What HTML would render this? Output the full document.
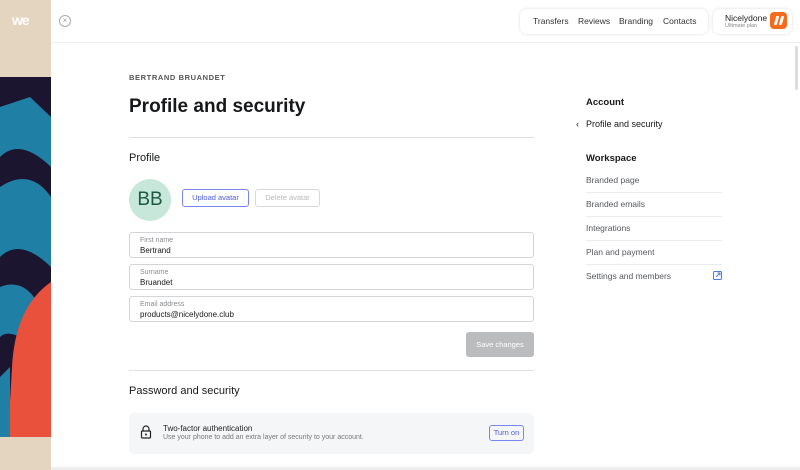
<!DOCTYPE html>
<html><head><meta charset="utf-8"><style>
*{box-sizing:border-box;margin:0;padding:0}
body{width:800px;height:470px;overflow:hidden;background:#fff;font-family:"Liberation Sans",sans-serif;color:#17181a;position:relative}
.a{position:absolute}
.t{position:absolute;white-space:nowrap}
.inp{position:absolute;left:129px;width:405px;height:26px;border:1px solid #d4d5d7;border-radius:3px}
.inp .l{position:absolute;left:10px;top:4px;font-size:7px;color:#8a8c90}
.inp .v{position:absolute;left:10px;top:13px;font-size:8px;color:#17181a}
.side{position:absolute;left:586px;font-size:8.5px;color:#56585c}
.hl{position:absolute;left:586px;width:136px;height:1px;background:#ececee}
</style></head><body>
<div class="a" style="left:0;top:0;width:51px;height:470px;background:#e3d5bf"></div>
<svg class="a" style="left:0;top:77px" width="51" height="360" viewBox="0 0 51 360">
<rect width="51" height="360" fill="#1b1530"/>
<path d="M0 30 L30 20 L51 40 L51 90 Q20 60 0 80Z" fill="#1f7fa5"/>
<path d="M0 110 Q30 90 51 120 L51 190 Q20 160 0 180Z" fill="#1f7fa5"/>
<path d="M0 210 Q25 200 40 230 L35 270 Q10 250 0 260Z" fill="#1f7fa5"/>
<path d="M51 205 Q15 230 12 290 L8 360 L51 360Z" fill="#e9513d"/>
<path d="M0 300 L10 290 L10 360 L0 360Z" fill="#1f7fa5"/>
</svg>
<div class="t" style="left:12px;top:12px;font-size:14px;font-weight:bold;color:#fff;letter-spacing:-1px">we</div>
<div class="a" style="left:51px;top:0;width:749px;height:470px;background:#fff"></div>
<div class="a" style="left:59px;top:15px;width:12px;height:12px;border:1px solid #aaa;border-radius:50%;font-size:8px;color:#999;text-align:center;line-height:10px">×</div>
<div class="a" style="left:51px;top:42px;width:749px;height:1px;background:#f0f0f0"></div>
<div class="a" style="left:520px;top:9px;width:188px;height:25px;border-radius:7px;box-shadow:0 0 3px rgba(0,0,0,.15);background:#fff"></div>
<div class="t" style="left:533px;top:16px;font-size:8.5px;color:#333">Transfers</div>
<div class="t" style="left:578px;top:16px;font-size:8.5px;color:#333">Reviews</div>
<div class="t" style="left:619px;top:16px;font-size:8.5px;color:#333">Branding</div>
<div class="t" style="left:663px;top:16px;font-size:8.5px;color:#333">Contacts</div>
<div class="a" style="left:713px;top:9px;width:79px;height:25px;border-radius:7px;box-shadow:0 0 3px rgba(0,0,0,.15);background:#fff"></div>
<div class="t" style="left:725px;top:13px;font-size:8.5px;color:#222">Nicelydone</div>
<div class="t" style="left:725px;top:23px;font-size:5.5px;color:#888">Ultimate plan</div>
<div class="a" style="left:770px;top:12px;width:17px;height:17px;border-radius:4px;background:#f56a1c"></div>
<div class="a" style="left:775px;top:16px;width:3px;height:9px;background:#fff;transform:skewX(-15deg);border-radius:1px"></div>
<div class="a" style="left:780px;top:16px;width:3px;height:9px;background:#fff;transform:skewX(-15deg);border-radius:1px"></div>
<div class="a" style="left:795px;top:46px;width:3px;height:44px;background:#ddd;border-radius:2px"></div>
<div class="t" style="left:129px;top:73px;font-size:7.5px;font-weight:bold;color:#555;letter-spacing:0.6px">BERTRAND BRUANDET</div>
<div class="t" style="left:129px;top:96px;font-size:19px;font-weight:bold;color:#17181a">Profile and security</div>
<div class="a" style="left:129px;top:137px;width:405px;height:1px;background:#e0e0e2"></div>
<div class="t" style="left:129px;top:152px;font-size:11px;color:#17181a">Profile</div>
<div class="a" style="left:129px;top:179px;width:42px;height:42px;border-radius:50%;background:#c6e7da;color:#1e5a44;font-size:19px;text-align:center;line-height:42px">BB</div>
<div class="a" style="left:182px;top:189px;width:67px;height:18px;border:1px solid #7a86f0;border-radius:3px;color:#4b5be0;font-size:7.5px;text-align:center;line-height:16px">Upload avatar</div>
<div class="a" style="left:255px;top:189px;width:65px;height:18px;border:1px solid #d8d8da;border-radius:3px;color:#b8b9bc;font-size:7.5px;text-align:center;line-height:16px">Delete avatar</div>
<div class="inp" style="top:232px"><div class="l">First name</div><div class="v">Bertrand</div></div>
<div class="inp" style="top:264px"><div class="l">Surname</div><div class="v">Bruandet</div></div>
<div class="inp" style="top:296px"><div class="l">Email address</div><div class="v">products@nicelydone.club</div></div>
<div class="a" style="left:466px;top:332px;width:68px;height:25px;border-radius:3px;background:#babcbe;color:#fff;font-size:7.5px;text-align:center;line-height:25px">Save changes</div>
<div class="a" style="left:129px;top:370px;width:405px;height:1px;background:#e0e0e2"></div>
<div class="t" style="left:129px;top:385px;font-size:11px;color:#17181a">Password and security</div>
<div class="a" style="left:129px;top:413px;width:405px;height:41px;border-radius:5px;background:#f4f6f7"></div>
<svg class="a" style="left:140px;top:425px" width="12" height="14" viewBox="0 0 12 14"><path d="M3 6V4a3 3 0 0 1 6 0v2" fill="none" stroke="#222" stroke-width="1.2"/><rect x="1.5" y="6" width="9" height="7" rx="1" fill="none" stroke="#222" stroke-width="1.2"/><circle cx="6" cy="9.5" r="1" fill="#222"/></svg>
<div class="t" style="left:163px;top:424px;font-size:8px;color:#222">Two-factor authentication</div>
<div class="t" style="left:163px;top:434px;font-size:7px;color:#777">Use your phone to add an extra layer of security to your account.</div>
<div class="a" style="left:489px;top:425px;width:35px;height:16px;border:1px solid #7a86f0;border-radius:3px;color:#4b5be0;font-size:7.5px;text-align:center;line-height:14px">Turn on</div>
<div class="a" style="left:51px;top:467px;width:749px;height:3px;background:#eee"></div>
<div class="t" style="left:586px;top:97px;font-size:9.5px;font-weight:bold;color:#17181a">Account</div>
<div class="t" style="left:576px;top:119px;font-size:9px;color:#17181a">‹</div>
<div class="t" style="left:586px;top:119px;font-size:9px;color:#17181a">Profile and security</div>
<div class="t" style="left:586px;top:153px;font-size:9.5px;font-weight:bold;color:#17181a">Workspace</div>
<div class="side" style="top:175px">Branded page</div><div class="hl" style="top:192px"></div>
<div class="side" style="top:199px">Branded emails</div><div class="hl" style="top:216px"></div>
<div class="side" style="top:223px">Integrations</div><div class="hl" style="top:240px"></div>
<div class="side" style="top:247px">Plan and payment</div><div class="hl" style="top:264px"></div>
<div class="side" style="top:271px">Settings and members</div>
<svg class="a" style="left:713px;top:271px" width="9" height="9" viewBox="0 0 9 9"><rect x=".5" y=".5" width="8" height="8" rx="1" fill="none" stroke="#4b7ee0"/><path d="M3 6L7 2M4.5 2H7V4.5" fill="none" stroke="#4b7ee0"/></svg>
</body></html>
